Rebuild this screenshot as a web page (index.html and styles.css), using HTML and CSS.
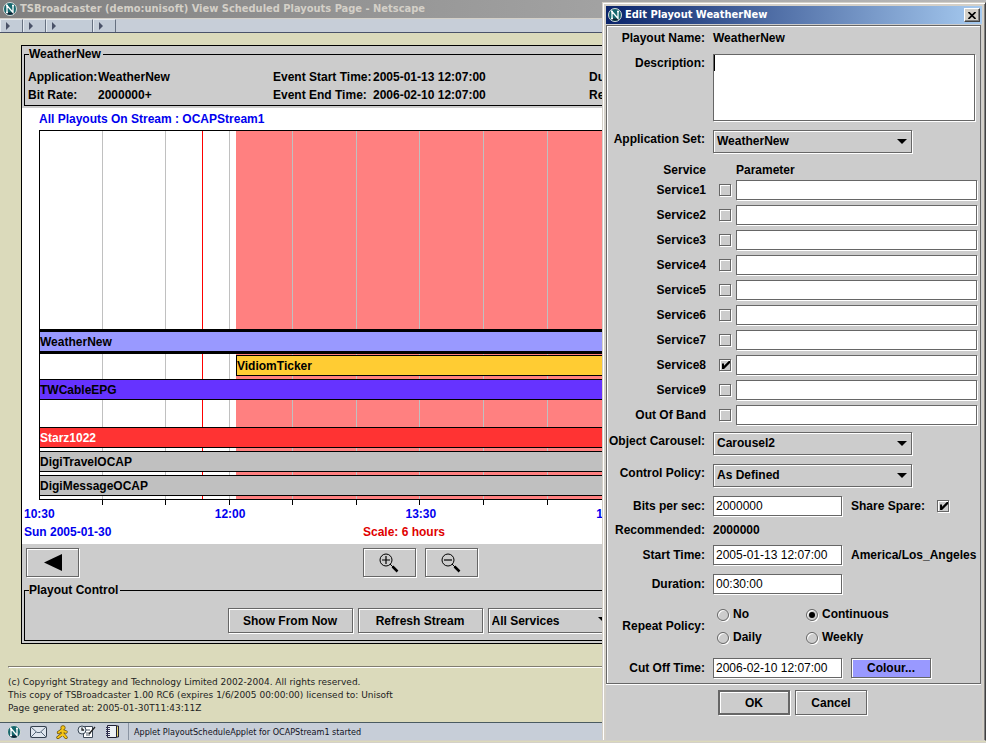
FILE: index.html
```html
<!DOCTYPE html>
<html lang="en">
<head>
  <meta charset="UTF-8">
  <title>TSBroadcaster (demo:unisoft) View Scheduled Playouts Page - Netscape</title>
  <link rel="stylesheet" href="styles.css">
</head>
<body>
  <svg class="sprite" width="0" height="0" aria-hidden="true">
    <symbol id="logo" viewBox="0 0 14 14">
      <circle cx="7" cy="7" r="6.5" fill="#17686e" stroke="#d8dcdc"/>
      <path d="M2.5 10.5h9a5.5 5.5 0 0 1-9 0z" fill="#123"/>
      <path d="M4 10.500V3.500L10 10.500V3.500M3 3.500h2M9 3.500h2M3 10.500h2" fill="none" stroke="#fff" stroke-width="1.300"/>
    </symbol>
  </svg>

  <div class="browser">
    <header class="titlebar">
      <svg class="logo"><use href="#logo"/></svg>
      <span>TSBroadcaster (demo:unisoft) View Scheduled Playouts Page - Netscape</span>
    </header>
    <div class="toolbar">
      <button class="tool" aria-label="Navigation"></button>
      <button class="tool" aria-label="Search"></button>
      <button class="tool wide" aria-label="Bookmarks"></button>
      <button class="tool" aria-label="Tabs"></button>
    </div>

    <main class="page">
      <section class="applet">
        <fieldset class="group">
          <legend>WeatherNew</legend>
          <div class="info">
            <span>Application:</span><span>WeatherNew</span>
            <span>Event Start Time:</span><span>2005-01-13 12:07:00</span>
            <span>Duration:</span>
            <span>Bit Rate:</span><span>2000000+</span>
            <span>Event End Time:</span><span>2006-02-10 12:07:00</span>
            <span>Repeat:</span>
          </div>
        </fieldset>

        <div class="schedule">
          <h2>All Playouts On Stream : OCAPStream1</h2>
          <div class="chart">
            <div class="zone"></div>
            <div class="lines"><i></i><i></i><i></i><i></i><i></i><i></i><i></i><i></i><i></i><i></i><i></i><i></i></div>
            <div class="now"></div>
            <div class="lanes">
              <div class="bar weather">WeatherNew</div>
              <div class="bar ticker">VidiomTicker</div>
              <div class="bar epg">TWCableEPG</div>
              <div class="bar empty"></div>
              <div class="bar starz">Starz1022</div>
              <div class="bar">DigiTravelOCAP</div>
              <div class="bar">DigiMessageOCAP</div>
            </div>
          </div>
          <div class="ticks"><i></i><i></i><i></i><i></i><i></i><i></i><i></i><i></i><i></i><i></i><i></i><i></i></div>
          <div class="times"><span>10:30</span><span>12:00</span><span>13:30</span><span>15:00</span></div>
          <div class="three">
            <span class="date">Sun 2005-01-30</span>
            <span class="scale">Scale: 6 hours</span>
          </div>
        </div>

        <div class="three nav">
          <div>
            <button class="btn icon" aria-label="Back">
              <svg width="18" height="17" viewBox="0 0 18 17"><path d="M0 8.500L18 0v17z"/></svg>
            </button>
          </div>
          <div class="zoom">
            <button class="btn icon" aria-label="Zoom in">
              <svg width="20" height="20" viewBox="0 0 20 20" fill="none" stroke="#000">
                <circle cx="7" cy="7" r="6"/><path d="M3 7h8M7 3v8" stroke-width="1.200"/><path d="M11 11l3 3"/><path d="M13.500 13.500l5 5" stroke-width="2.500"/>
              </svg>
            </button>
            <button class="btn icon" aria-label="Zoom out">
              <svg width="20" height="20" viewBox="0 0 20 20" fill="none" stroke="#000">
                <circle cx="7" cy="7" r="6"/><path d="M3 7h8" stroke-width="1.200"/><path d="M11 11l3 3"/><path d="M13.500 13.500l5 5" stroke-width="2.500"/>
              </svg>
            </button>
          </div>
          <div class="end">
            <button class="btn icon" aria-label="Forward">
              <svg width="18" height="17" viewBox="0 0 18 17"><path d="M18 8.500L0 0v17z"/></svg>
            </button>
          </div>
        </div>

        <fieldset class="group">
          <legend>Playout Control</legend>
          <div class="controls">
            <button class="btn">Show From Now</button>
            <button class="btn">Refresh Stream</button>
            <div class="select">
              <select aria-label="Services"><option>All Services</option></select>
            </div>
          </div>
        </fieldset>
      </section>

      <hr>
      <footer>
        (c) Copyright Strategy and Technology Limited 2002-2004. All rights reserved.<br>
        This copy of TSBroadcaster 1.00 RC6 (expires 1/6/2005 00:00:00) licensed to: Unisoft<br>
        Page generated at: 2005-01-30T11:43:11Z
      </footer>
    </main>

    <div class="statusbar">
      <div class="icons">
        <svg width="14" height="14"><use href="#logo"/></svg>
        <svg width="17" height="12" viewBox="0 0 17 12">
          <rect x=".5" y=".5" width="16" height="11" rx="1" fill="#dfe6ee" stroke="#34404e"/>
          <path d="M1 1l6 5.500h3L16 1M1 11l5-5M16 11l-5-5" fill="none" stroke="#56677a"/>
        </svg>
        <svg width="12" height="14" viewBox="0 0 12 14">
          <path d="M6 5L2.500 7.500M6.500 5v4L2 12.500M7 9l3 3.500M7 6l3 1" fill="none" stroke="#5a4300" stroke-width="3.200" stroke-linecap="round"/>
          <circle cx="7" cy="2.800" r="2.200" fill="#f5c518" stroke="#5a4300" stroke-width=".7"/>
          <path d="M6 5L2.500 7.500M6.500 5v4L2 12.500M7 9l3 3.500M7 6l3 1" fill="none" stroke="#f5c518" stroke-width="2" stroke-linecap="round"/>
        </svg>
        <svg width="19" height="14" viewBox="0 0 19 14">
          <path d="M6.500 1.500h9v11h-9z" fill="#fff" stroke="#3c4856"/>
          <path d="M9 5h4M9 8h5M9 10h4" stroke="#55606c"/>
          <circle cx="5" cy="5" r="4" fill="#e6edf3" stroke="#3c4856"/>
          <path d="M5 2.500V5H7M12 9l6-7" fill="none" stroke="#222" stroke-width="1.300"/>
        </svg>
        <svg width="15" height="13" viewBox="0 0 15 13">
          <path d="M2.500 .5h9v12h-9z" fill="#eef2f5" stroke="#223"/>
          <path d="M11.500 1h2v11h-2z" fill="#e6d36a" stroke="#223"/>
          <path d="M1 2.500h4M1 4.500h4M1 6.500h4M1 8.500h4M1 10.500h4" stroke="#335"/>
        </svg>
      </div>
      <span class="status">Applet PlayoutScheduleApplet for OCAPStream1 started</span>
    </div>
  </div>

  <form class="dialog" onsubmit="return false">
    <div class="caption">
      <svg class="logo"><use href="#logo"/></svg>
      <span>Edit Playout WeatherNew</span>
      <button type="button" class="close" aria-label="Close">
        <svg width="8" height="7" viewBox="0 0 8 7"><path d="M.5 0l7 7M7.500 0l-7 7" stroke="#000" stroke-width="1.600"/></svg>
      </button>
    </div>

    <div class="panel">
      <div class="row name">
        <span class="label">Playout Name:</span><span>WeatherNew</span>
      </div>
      <div class="row top">
        <label class="label" for="description">Description:</label>
        <textarea id="description"></textarea>
      </div>
      <div class="row top">
        <label class="label" for="appset">Application Set:</label>
        <div class="select"><select id="appset"><option>WeatherNew</option></select></div>
      </div>

      <div class="services">
        <div class="service head"><span>Service</span><span></span><span>Parameter</span></div>
        <div class="service"><label for="s1">Service1</label><input type="checkbox" id="s1"><input type="text" aria-label="Service1 parameter"></div>
        <div class="service"><label for="s2">Service2</label><input type="checkbox" id="s2"><input type="text" aria-label="Service2 parameter"></div>
        <div class="service"><label for="s3">Service3</label><input type="checkbox" id="s3"><input type="text" aria-label="Service3 parameter"></div>
        <div class="service"><label for="s4">Service4</label><input type="checkbox" id="s4"><input type="text" aria-label="Service4 parameter"></div>
        <div class="service"><label for="s5">Service5</label><input type="checkbox" id="s5"><input type="text" aria-label="Service5 parameter"></div>
        <div class="service"><label for="s6">Service6</label><input type="checkbox" id="s6"><input type="text" aria-label="Service6 parameter"></div>
        <div class="service"><label for="s7">Service7</label><input type="checkbox" id="s7"><input type="text" aria-label="Service7 parameter"></div>
        <div class="service"><label for="s8">Service8</label><input type="checkbox" id="s8" checked><input type="text" aria-label="Service8 parameter"></div>
        <div class="service"><label for="s9">Service9</label><input type="checkbox" id="s9"><input type="text" aria-label="Service9 parameter"></div>
        <div class="service"><label for="oob">Out Of Band</label><input type="checkbox" id="oob"><input type="text" aria-label="Out Of Band parameter"></div>
      </div>

      <div class="row top">
        <label class="label" for="carousel">Object Carousel:</label>
        <div class="select"><select id="carousel"><option>Carousel2</option></select></div>
      </div>
      <div class="row top">
        <label class="label" for="policy">Control Policy:</label>
        <div class="select"><select id="policy"><option>As Defined</option></select></div>
      </div>
      <div class="row middle">
        <label class="label" for="bits">Bits per sec:</label>
        <div class="fields">
          <input type="text" id="bits" value="2000000">
          <label class="spare" for="spare">Share Spare:</label>
          <input type="checkbox" id="spare" checked>
        </div>
      </div>
      <div class="row short">
        <span class="label">Recommended:</span><span>2000000</span>
      </div>
      <div class="row middle">
        <label class="label" for="start">Start Time:</label>
        <div class="fields"><input type="text" id="start" value="2005-01-13 12:07:00"><span>America/Los_Angeles</span></div>
      </div>
      <div class="row middle">
        <label class="label" for="duration">Duration:</label>
        <div class="fields"><input type="text" id="duration" value="00:30:00"></div>
      </div>
      <div class="row middle">
        <span class="label" id="repeat">Repeat Policy:</span>
        <div class="radios" role="radiogroup" aria-labelledby="repeat">
          <label><input type="radio" name="repeat">No</label>
          <label><input type="radio" name="repeat" checked>Continuous</label>
          <label><input type="radio" name="repeat">Daily</label>
          <label><input type="radio" name="repeat">Weekly</label>
        </div>
      </div>
      <div class="row middle">
        <label class="label" for="cutoff">Cut Off Time:</label>
        <div class="fields">
          <input type="text" id="cutoff" value="2006-02-10 12:07:00">
          <button type="button" class="btn colour">Colour...</button>
        </div>
      </div>
    </div>

    <div class="actions">
      <button class="btn default">OK</button>
      <button type="button" class="btn">Cancel</button>
    </div>
  </form>
</body>
</html>
```
FILE: styles.css
```css
* {
  box-sizing: border-box;
}
body {
  margin: 0;
  font: bold 12px/16px "Liberation Sans", Arial, sans-serif;
  color: #000;
  background: #dbdabb;
  overflow: hidden;
}
button, input, select, textarea {
  font: inherit;
  color: inherit;
  margin: 0;
  border-radius: 0;
  outline: none;
}
.sprite {
  position: absolute;
}
.logo {
  width: 14px;
  height: 14px;
  flex: none;
}

/* browser window */
.browser {
  display: flex;
  flex-direction: column;
  height: 100vh;
  border-bottom: 3px double #d4d0c8;
  white-space: nowrap;
}
.titlebar {
  display: flex;
  align-items: center;
  gap: 3px;
  height: 19px;
  padding-left: 3px;
  background: linear-gradient(90deg, #808080, #b8b8b8);
  border-bottom: 1px solid #d4d0c8;
  color: #d4d0c8;
  font: bold 11px/18px "DejaVu Sans Condensed", Tahoma, sans-serif;
}
.toolbar {
  display: flex;
  height: 14px;
  background: #c7ced8;
  border-bottom: 1px solid #4a5268;
}
.tool {
  width: 23px;
  padding: 0 0 0 5px;
  background: #c3ccd7;
  border: 1px solid #e4eaf0;
  border-right-color: #667080;
  border-bottom: 0;
}
.tool.wide {
  width: 47px;
}
.tool::before {
  content: "";
  display: block;
  width: 4px;
  border: 4px solid transparent;
  border-left-color: #4a5268;
  border-right: 0;
}
.page {
  flex: 1;
  min-height: 0;
  padding: 12px 0 0 8px;
}

/* schedule applet */
.applet {
  max-width: 800px;
  margin-left: 13px;
  padding: 1px 0 2px;
  background: #ccc;
  border: 1px solid #000;
}
.group {
  min-width: 0;
  margin: 0 2px;
  padding: 6px 3px 1px;
  border: 1px solid #000;
}
.group legend {
  margin-left: 1px;
  padding: 0 2px 0 0;
  line-height: 15px;
}
.info {
  display: grid;
  grid-template-columns: 70px 175px 100px 216px 1fr;
  line-height: 18px;
}
.schedule {
  margin-top: 2px;
  padding-bottom: 3px;
  background: #fff;
  color: #00e;
}
.schedule h2 {
  margin: 0 17px;
  font-size: 12px;
  line-height: 22px;
}
.chart {
  display: grid;
  margin: 0 17px;
  border: 1px solid #000;
  color: #000;
}
/* all chart layers share one cell */
.chart > * {
  grid-area: 1 / 1;
}
.zone {
  margin-left: 196px;
  background: #ff8080;
}
.lines, .ticks {
  display: grid;
  grid-template-columns: repeat(12, 1fr);
}
.lines {
  margin-left: -1px;
}
.lines i {
  border-right: 1px solid #c0c0c0;
}
.now {
  width: 1px;
  margin-left: 162px;
  background: #f00;
}
.lanes {
  display: flex;
  flex-direction: column;
  gap: 3px;
  padding: 200px 0 3px;
}
.bar {
  height: 21px;
  background: #c0c0c0;
  border: solid #000;
  border-width: 1px 0;
  line-height: 20px;
}
.bar.weather {
  background: #99f;
  box-shadow: 0 2px #000, 0 -2px #000;
}
.bar.ticker {
  margin-left: 196px;
  background: #fc3;
  border-left-width: 1px;
}
.bar.epg {
  background: #63f;
}
.bar.empty {
  visibility: hidden;
}
.bar.starz {
  background: #f33;
  color: #fff;
}
.ticks {
  height: 5px;
  margin: 0 18px 0 17px;
}
.ticks i {
  border-right: 1px solid #000;
}
.times {
  display: grid;
  grid-template-columns: repeat(4, 1fr);
  margin: 0 33px 0 2px;
  line-height: 18px;
}
.three {
  display: grid;
  grid-template-columns: 1fr 116px 1fr;
  line-height: 18px;
}
.date {
  padding-left: 2px;
}
.scale {
  color: #e00000;
}
.nav {
  padding: 4px 5px 6px 4px;
}
.zoom {
  display: flex;
  gap: 9px;
}
.end {
  text-align: right;
}
.controls {
  display: flex;
  justify-content: center;
  gap: 5px;
  padding: 4px 2px 6px 0;
}
.controls .btn, .controls .select {
  width: 125px;
}

/* shared controls */
.btn {
  height: 25px;
  padding: 0;
  background: #ccc;
  border: 1px solid #666;
  box-shadow: 1px 1px #fff, inset 1px 1px #fff;
}
.btn.icon {
  display: inline-flex;
  align-items: center;
  justify-content: center;
  width: 53px;
  height: 29px;
}
.select {
  position: relative;
  width: 199px;
}
.select select {
  appearance: none;
  display: block;
  width: 100%;
  height: 23px;
  padding: 0 3px;
  background: #ccc;
  border: 1px solid #666;
  box-shadow: 1px 1px #fff, inset 1px 1px #fff;
}
.controls .select select {
  height: 25px;
}
.select::after {
  content: "";
  position: absolute;
  right: 5px;
  top: 9px;
  border: 5px solid transparent;
  border-top-color: #000;
  border-bottom: 0;
  pointer-events: none;
}
input[type="text"], textarea {
  height: 20px;
  padding: 0 2px;
  background: #fff;
  border: 1px solid #666;
  box-shadow: 1px 1px #fff;
  font-weight: normal;
}
input[type="checkbox"], input[type="radio"] {
  appearance: none;
  position: relative;
  flex: none;
  width: 12px;
  height: 12px;
  border: 1px solid #666;
  box-shadow: 1px 1px #fff, inset 1px 1px #fff;
}
input[type="checkbox"]:checked::after {
  content: "";
  position: absolute;
  left: 2px;
  top: 1px;
  width: 8px;
  height: 8px;
  background: #000;
  clip-path: polygon(0 30%, 25% 30%, 25% 60%, 85% 0, 100% 0, 100% 25%, 25% 100%, 0 100%);
}
input[type="radio"] {
  border-radius: 50%;
}
input[type="radio"]:checked::after {
  content: "";
  position: absolute;
  left: 2px;
  top: 2px;
  width: 6px;
  height: 6px;
  border-radius: 50%;
  background: #000;
}

hr {
  margin: 22px 0 8px;
  border: solid #807c70;
  border-width: 1px 0 0 1px;
  height: 2px;
  border-bottom: 1px solid #fff;
}
footer {
  font: 9px/13px "DejaVu Sans", Verdana, sans-serif;
  color: #222;
}

.statusbar {
  display: flex;
  align-items: center;
  height: 18px;
  background: #c7ced8;
  border-top: 1px solid #4a5a60;
}
.icons {
  display: flex;
  align-items: center;
  gap: 9px;
  height: 100%;
  padding: 0 8px 0 7px;
  border-right: 1px solid #8a94a2;
}
.status {
  padding-left: 5px;
  font: 9px/16px "DejaVu Sans Condensed", Tahoma, sans-serif;
  color: #112;
}

/* edit dialog, floats over the browser window */
.dialog {
  position: absolute;
  top: 2px;
  right: 0;
  bottom: 2px;
  width: 384px;
  padding: 3px;
  background: #ccc;
  border: 1px solid #d4d0c8;
  border-right-color: #404040;
  box-shadow: inset 1px 1px #fff, inset -1px 0 #808080, inset 3px 3px #d4d0c8, inset -3px 0 #d4d0c8;
}
.caption {
  display: flex;
  align-items: center;
  gap: 3px;
  height: 18px;
  padding: 0 2px;
  background: linear-gradient(90deg, #0a246a, #a6caf0);
  color: #fff;
  font: bold 11px/18px "DejaVu Sans Condensed", Tahoma, sans-serif;
}
.close {
  display: flex;
  align-items: center;
  justify-content: center;
  width: 16px;
  height: 14px;
  margin-left: auto;
  padding: 0;
  background: #d4d0c8;
  border: 1px solid;
  border-color: #fff #404040 #404040 #fff;
  box-shadow: inset -1px -1px #808080;
}
.panel {
  margin: 1px 1px 0 0;
  padding-top: 4px;
  border: 1px solid #666;
  box-shadow: inset 1px 1px #fff, 0 1px #fff;
}
.row {
  display: grid;
  grid-template-columns: 98px 1fr;
  column-gap: 8px;
  margin-bottom: 9px;
  padding-right: 5px;
  line-height: 15px;
}
.row:last-child {
  margin-bottom: 5px;
}
.row.name {
  margin-bottom: 7px;
  line-height: 17px;
}
.row.top .label {
  padding-top: 2px;
}
.row.middle {
  align-items: center;
}
.row.short {
  line-height: 11px;
}
.label {
  text-align: right;
}
/* one pixel wide caret in the empty description box */
textarea {
  display: block;
  width: 100%;
  height: 67px;
  resize: none;
  background: #fff linear-gradient(#000, #000) no-repeat 0 0 / 1px 16px;
}
.services {
  display: grid;
  gap: 5px;
  margin-bottom: 7px;
}
.service {
  display: grid;
  grid-template-columns: 99px 12px 1fr;
  align-items: center;
  height: 20px;
  padding-right: 3px;
}
.service > :nth-child(2) {
  margin-left: 13px;
}
.service > :nth-child(3) {
  margin-left: 18px;
}
.service > :first-child {
  text-align: right;
}
.service.head {
  height: 13px;
}
.fields {
  display: flex;
  align-items: center;
  gap: 9px;
}
.fields input[type="text"] {
  width: 129px;
}
.fields span {
  white-space: nowrap;
}
.spare {
  margin-right: 3px;
}
.radios {
  display: grid;
  grid-template-columns: 89px 1fr;
  padding-left: 4px;
  line-height: 23px;
}
.radios label {
  display: flex;
  align-items: center;
  gap: 4px;
}
.btn.colour {
  width: 80px;
  height: 20px;
  background: #99f;
}
.actions {
  display: flex;
  justify-content: center;
  gap: 5px;
  margin: 6px 3px 0 0;
}
.actions .btn {
  width: 72px;
}
.actions .default {
  border-width: 2px;
}
```
